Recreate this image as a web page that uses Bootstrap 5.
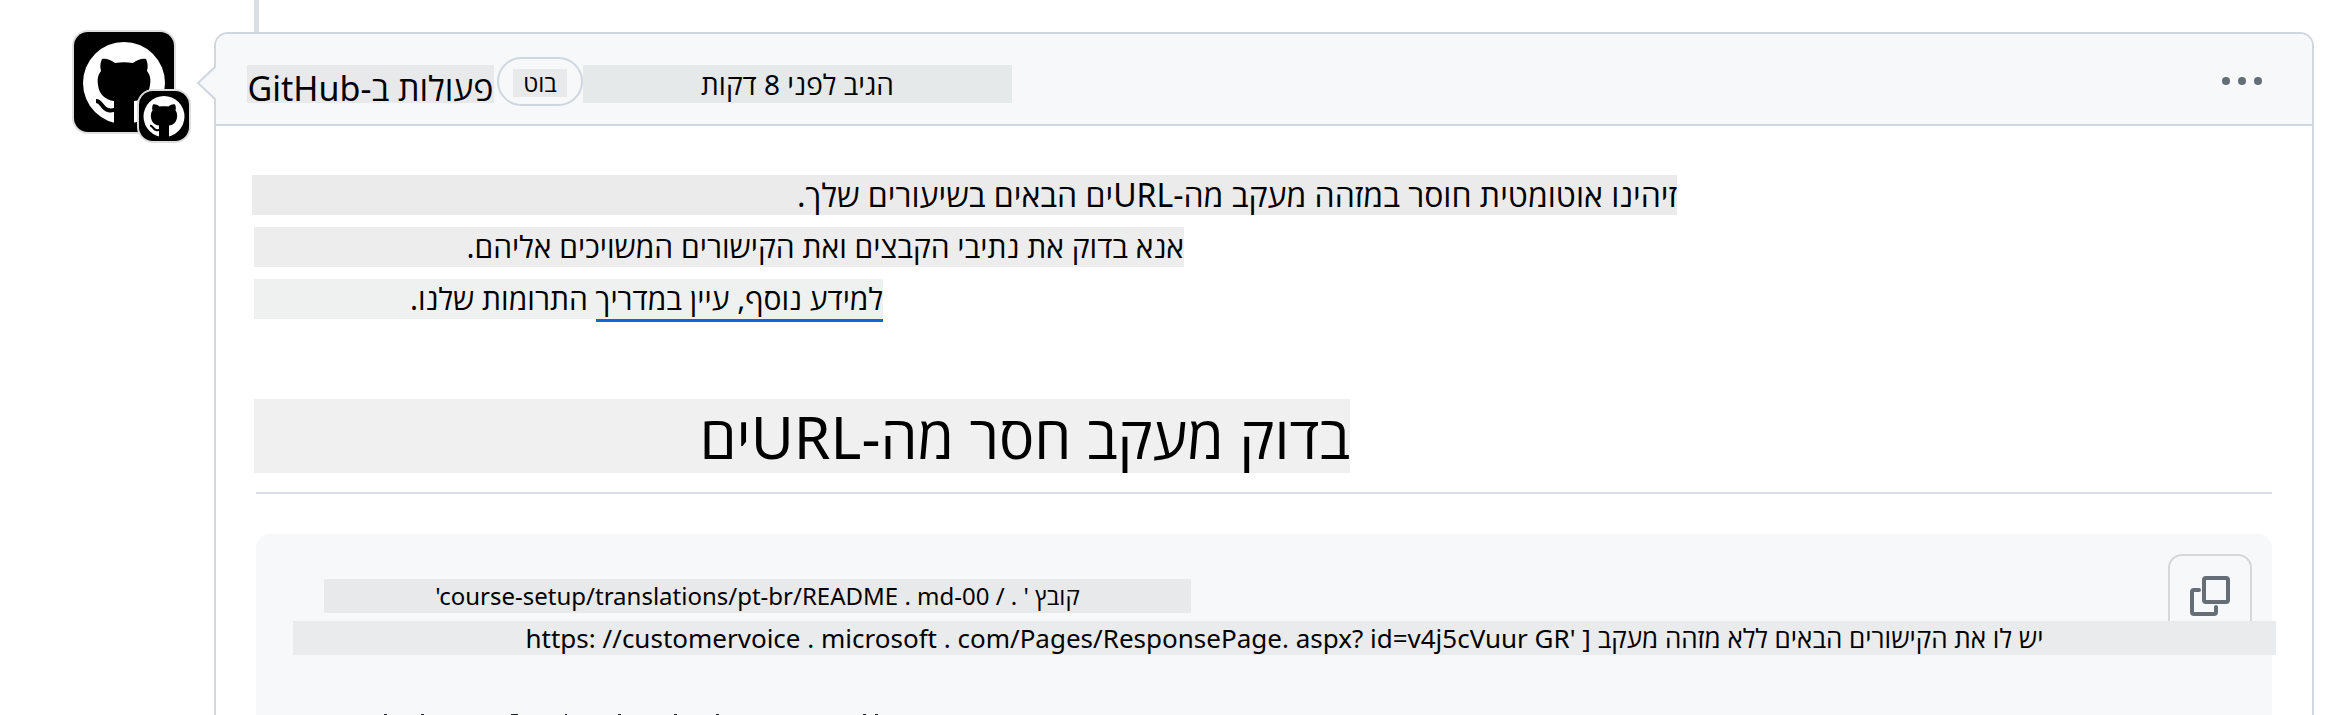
<!DOCTYPE html>
<html lang="he">
<head>
<meta charset="utf-8">
<meta name="viewport" content="width=device-width, initial-scale=1">
<title>GitHub</title>
<link href="https://cdn.jsdelivr.net/npm/bootstrap@5.3.0/dist/css/bootstrap.min.css" rel="stylesheet">
<style>
:root { --line: #d0d7de; --soft: #f6f8fa; }
body { font-family: "Noto Sans", "Open Sans", "DejaVu Sans", sans-serif; color: #000; background: #fff; }
.timeline { padding: 32px 12px 0 74px; gap: 40px; }
.timeline-line { left: 254px; top: 0; width: 5px; height: 32px; background: #d8dee4; }
.avatar-box { width: 100px; height: 100px; }
.avatar-main, .avatar-sub { background: #000; box-shadow: 0 0 0 2px #dedede; overflow: hidden; display: block; }
.avatar-main { width: 100px; height: 100px; border-radius: 14px; }
.avatar-sub { width: 50px; height: 50px; border-radius: 14px; left: 65px; top: 59px; }
.comment { border: 2px solid var(--line); border-bottom: 0; border-radius: 14px 14px 0 0; min-width: 0; }
.comment-head { background: var(--soft); border-bottom: 2px solid var(--line); border-radius: 12px 12px 0 0; height: 92px; padding: 4px 46px 0 31px; }
.caret { left: -20px; top: 30px; width: 20px; height: 38px; }
.patch { display: block; white-space: nowrap; max-width: 100%; }
.author { font-size: 34px; line-height: 38px; height: 38px; width: 247px; padding-top: 4px; margin-top: 6px; background: #e8e9ea; color: #000; }
.bot { border: 2px solid var(--line); border-radius: 25px; height: 49px; width: 86px; margin-left: 3px; }
.bot .patch { width: 54px; font-size: 24px; line-height: 28px; background: #e8e9ea; margin-top: 4px; }
.when { width: 429px; font-size: 28px; line-height: 38px; margin-top: 6px; background: #e5e9ea; }
.dots { width: 48px; height: 48px; }
.comment-text { padding: 49px 40px 0; }
.para { line-height: 40px; margin: 0 0 12px -2px; font-size: 30px; }
.p1 { width: 1425px; background: #ebebeb; font-size: 32px; margin-left: -4px; }
.p2 { width: 930px; background: #ededed; }
.p3 { width: 629px; background: #eff1f0; }
.guide { color: #000; text-decoration: none; border-bottom: 3px solid #0969da; }
.title-row { border-bottom: 2px solid #d8dee4; padding-bottom: 19px; margin-top: 80px; }
.title-row h2 { width: 1096px; margin-left: -2px; font-size: 59px; line-height: 74px; font-weight: 400; background: #f0f0f0; }
.code-box { background: var(--soft); border-radius: 14px 14px 0 0; margin-top: 40px; padding: 45px 0 0 37px; }
.code-line { font-size: 24px; line-height: 34px; }
.c1 { width: 867px; background: #e8e9ea; margin-left: 31px; }
.c2 { width: 1983px; max-width: none; font-size: 26px; background: #eaebec; margin-top: 8px; }
.copy { right: 20px; top: 20px; width: 84px; height: 84px; border: 2px solid #d5d8da; border-radius: 14px; background: var(--soft); }
</style>
</head>
<body>
<svg class="d-none">
  <symbol id="cat" viewBox="0 0 100 100">
    <circle cx="50" cy="51" r="41" fill="#fff"/>
    <path d="M28 27c4-1 9 1 13 4 6-1 12-1 18 0 4-3 9-5 13-4 2 4 2 8 1 12 3 4 4 8 3 14-1 9-7 15-16 16v25H40V69c-9-1-15-7-16-16-1-6 0-10 3-14-1-4-1-8 1-12z"/>
    <path d="M22 69c6 0 6 8 12 9 3 1 6 0 8-1" fill="none" stroke="#000" stroke-width="4"/>
  </symbol>
</svg>
<div class="timeline-line position-absolute"></div>
<main class="timeline d-flex vh-100">
  <a href="#" class="avatar-box position-relative flex-shrink-0" aria-label="GitHub">
    <svg class="avatar-main"><use href="#cat"/></svg>
    <svg class="avatar-sub position-absolute"><use href="#cat"/></svg>
  </a>
  <article class="comment flex-grow-1 position-relative d-flex flex-column">
    <svg class="caret position-absolute" viewBox="0 0 20 38"><path d="M20 2L2 19l18 17" fill="#f6f8fa" stroke="#d0d7de" stroke-width="2"/></svg>
    <header class="comment-head d-flex align-items-center flex-shrink-0">
      <a href="#" class="author patch text-decoration-none d-flex justify-content-center" dir="rtl"><span>פעולות ב-GitHub</span></a>
      <span class="bot d-flex align-items-center justify-content-center flex-shrink-0"><span class="patch text-center" dir="rtl">בוט</span></span>
      <span class="when patch text-center" dir="rtl">הגיב לפני 8 דקות</span>
      <button type="button" class="dots btn p-0 border-0 ms-auto" aria-label="אפשרויות"><svg class="d-block" width="48" height="48" fill="#656d76"><circle cx="8" cy="24" r="4"/><circle cx="24" cy="24" r="4"/><circle cx="40" cy="24" r="4"/></svg></button>
    </header>
    <div class="comment-text d-flex flex-column flex-grow-1">
      <p class="para p1 patch" dir="rtl">זיהינו אוטומטית חוסר במזהה מעקב מה-URLים הבאים בשיעורים שלך.</p>
      <p class="para p2 patch" dir="rtl">אנא בדוק את נתיבי הקבצים ואת הקישורים המשויכים אליהם.</p>
      <p class="para p3 patch mb-0" dir="rtl"><a href="#" class="guide">למידע נוסף, עיין במדריך</a> התרומות שלנו.</p>
      <div class="title-row"><h2 class="patch mb-0" dir="rtl">בדוק מעקב חסר מה-URLים</h2></div>
      <div class="code-box position-relative flex-grow-1 d-flex flex-column">
        <button type="button" class="copy btn position-absolute p-0" aria-label="העתק"><svg width="40" height="40" viewBox="0 0 40 40" fill="none" stroke="#656d76" stroke-width="4" stroke-linecap="round" stroke-linejoin="round"><rect x="14" y="2" width="24" height="24" rx="2"/><path d="M9 14H4a2 2 0 0 0-2 2v20a2 2 0 0 0 2 2h20a2 2 0 0 0 2-2v-5"/></svg></button>
        <div class="code-line c1 patch text-center position-relative"><bdo dir="ltr">'course-setup/translations/pt-br/README . md-00 / . ' <bdi>קובץ</bdi></bdo></div>
        <div class="code-line c2 patch text-center position-relative"><bdo dir="ltr">https: //customervoice . microsoft . com/Pages/ResponsePage. aspx? id=v4j5cVuur GR' ] <bdi>יש לו את הקישורים הבאים ללא מזהה מעקב</bdi></bdo></div>
        <!-- tops of the next code row, cut by the fold -->
        <svg class="mt-auto d-block" width="600" height="1" fill="#1f2328"><path d="M91 0h3v1h-3zM128 0h3v1h-3zM218 0h7v1h-7zM272 0h2v1h-2zM325 0h3v1h-3zM381 0h3v1h-3zM423 0h3v1h-3zM570 0h3v1h-3zM582 0h3v1h-3z"/></svg>
      </div>
    </div>
  </article>
</main>
<script src="https://cdn.jsdelivr.net/npm/bootstrap@5.3.0/dist/js/bootstrap.bundle.min.js"></script>
</body>
</html>
